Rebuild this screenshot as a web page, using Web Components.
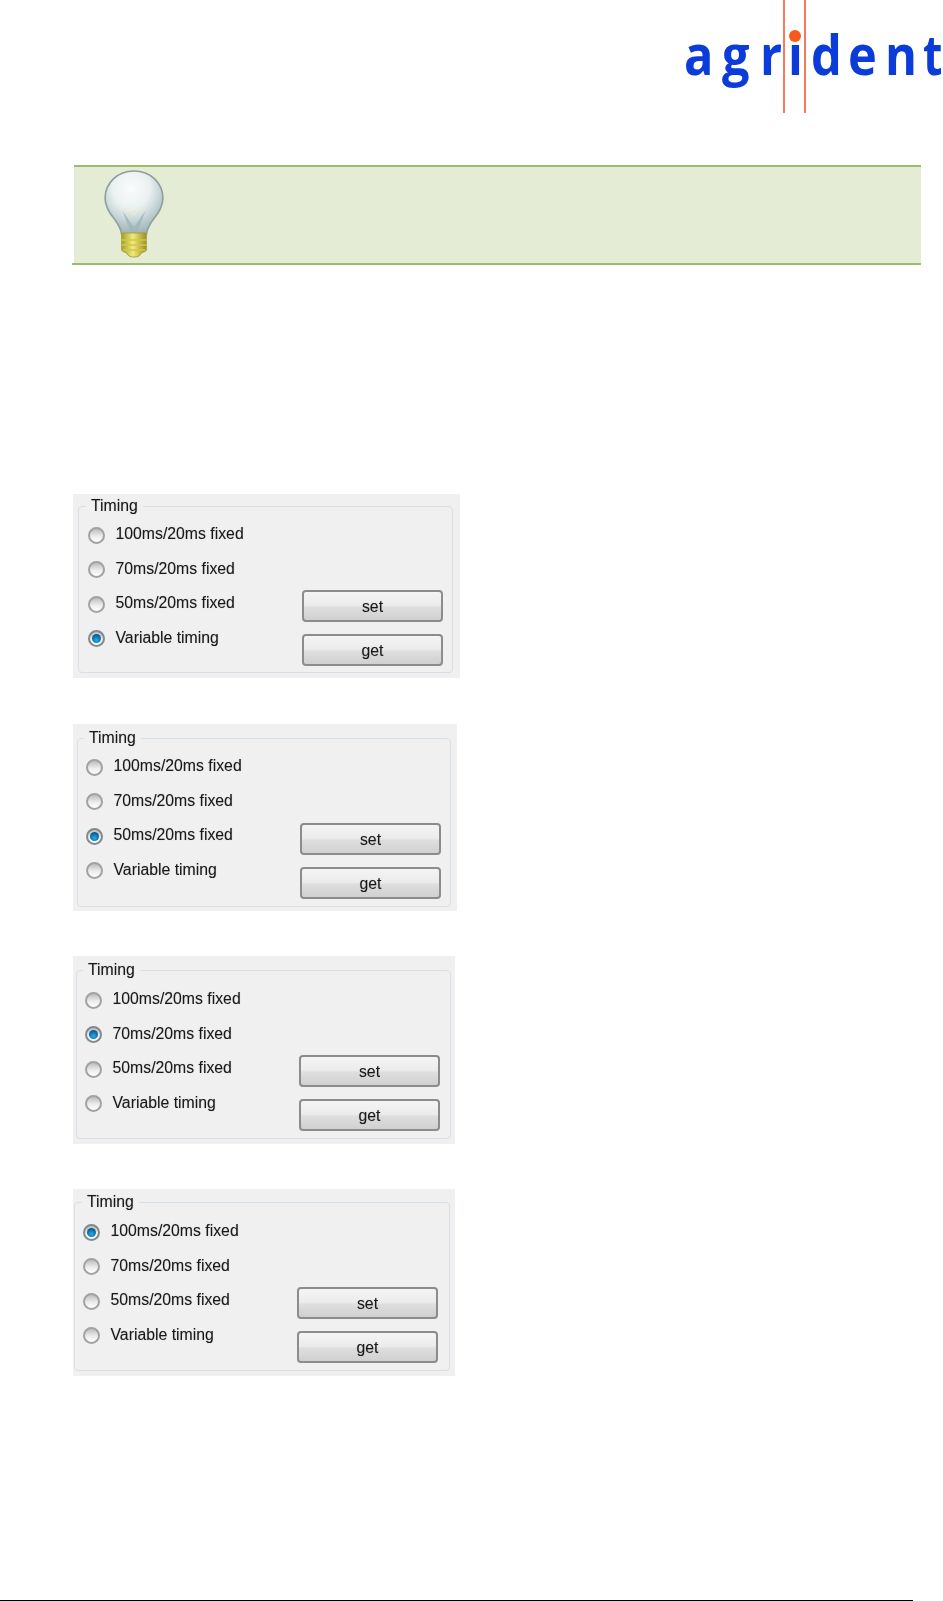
<!DOCTYPE html>
<html>
<head>
<meta charset="utf-8">
<title>agrident timing</title>
<style>
    html, body { margin: 0; padding: 0; background: #fff; }
    body { width: 943px; height: 1601px; overflow: hidden; display: flex; flex-direction: column; font-family: "Liberation Sans", sans-serif; }
    page-footer { margin-top: auto; }
</style>
</head>
<body>
<agrident-logo></agrident-logo>
<tip-note></tip-note>
<timing-panel selected="3" top="229" width="387" height="184" inset="12 7 5 5" title-x="7" radio-x="8.5" radio-y="11" btn-right="9" btn-bottom="6"></timing-panel>
<timing-panel selected="2" top="46" width="384" height="187" inset="14 6 4 4" title-x="6" radio-x="7.5" radio-y="11" btn-right="9" btn-bottom="7"></timing-panel>
<timing-panel selected="1" top="45" width="382" height="188" inset="14 4 5 3" title-x="6" radio-x="7.5" radio-y="12" btn-right="10" btn-bottom="7"></timing-panel>
<timing-panel selected="0" top="45" width="382" height="187" inset="13 5 5 1" title-x="7" radio-x="7.5" radio-y="12" btn-right="11" btn-bottom="7"></timing-panel>
<page-footer></page-footer>

<script>
class AgridentLogo extends HTMLElement {
    connectedCallback() {
        this.attachShadow({ mode: 'open' }).innerHTML = `
        <style>
            :host { display: block; height: 113px; overflow: hidden; }
            .logo { position: relative; height: 113px; margin-left: 684px; overflow: hidden; }
            .word { display: flex; padding-top: 15px; color: #0b3bd9; font: 700 56px/76px "Open Sans", sans-serif; white-space: nowrap; }
            .word span { display: block; flex: none; transform: scaleX(.87); transform-origin: 0 50%; }
            .word span.t { transform: scaleX(.8); }
            .line { position: absolute; top: 0; bottom: 0; width: 2px; background: #f97a5a; }
            .dot { position: absolute; left: 105px; top: 30px; width: 12px; height: 12px; border-radius: 50%; background: #f95a1c; }
        </style>
        <div class="logo">
            <div class="word"><span style="width:38px">a</span><span style="width:38px">g</span><span style="width:28px">r</span><span style="width:23px">i</span><span style="width:37px">d</span><span style="width:37px">e</span><span style="width:38px">n</span><span class="t">t</span></div>
            <div class="line" style="left:99px"></div>
            <div class="line" style="left:120px"></div>
            <div class="dot"></div>
        </div>`;
    }
}

class TipNote extends HTMLElement {
    connectedCallback() {
        this.attachShadow({ mode: 'open' }).innerHTML = `
        <style>
            :host { display: block; margin: 52px 22px 0 72px; }
            .box { height: 96px; margin-left: 2px; background: #e5ecd5; border-top: 2px solid #9dbd66; }
            .bottom { height: 2px; background: #9dbd66; }
            svg { display: block; margin-left: 27px; padding-top: 2px; }
        </style>
        <div class="box">
            <svg width="66" height="92" viewBox="0 0 64 92" preserveAspectRatio="none">
                <defs>
                    <radialGradient id="glass" cx="45%" cy="28%" r="72%">
                        <stop offset="0" stop-color="#fbfcfc"/>
                        <stop offset=".45" stop-color="#eaf0f0"/>
                        <stop offset=".75" stop-color="#bfcfd1"/>
                        <stop offset="1" stop-color="#9fb3b6"/>
                    </radialGradient>
                    <linearGradient id="screw" x1="0" x2="1" y1="0" y2="0">
                        <stop offset="0" stop-color="#a89f24"/>
                        <stop offset=".45" stop-color="#f2ea7a"/>
                        <stop offset="1" stop-color="#9c9020"/>
                    </linearGradient>
                    <filter id="soft"><feGaussianBlur stdDeviation=".7"/></filter>
                </defs>
                <g filter="url(#soft)">
                    <path d="M32 2C16 2 4 14 4 29c0 9 4 15 9 21 3 4 6 9 7 15h24c1-6 4-11 7-15 5-6 9-12 9-21C60 14 48 2 32 2z" fill="url(#glass)" stroke="#909f9b" stroke-width="1.6"/>
                    <path d="M21 42l8 22h6l8-22-10 15h-2z" fill="#9fb6ba" opacity=".85"/>
                    <path d="M21 40l5-1 6 7 6-7 5 1" fill="none" stroke="#eeeec0" stroke-width="1"/>
                    <path d="M20 64h24v17c0 1-2 2-5 3-1 3-3 4-7 4s-6-1-7-4c-3-1-5-2-5-3z" fill="url(#screw)" stroke="#a09a34" stroke-width=".8"/>
                    <path d="M20 71h24M20 76h24M21 81h22" stroke="#d0c748" stroke-width="1.5"/>
                </g>
            </svg>
        </div>
        <div class="bottom"></div>`;
    }
}

class TimingRadio extends HTMLElement {
    connectedCallback() {
        let on = this.hasAttribute('checked');
        this.attachShadow({ mode: 'open' }).innerHTML = `
        <style>
            :host { display: flex; align-items: center; gap: 11px; height: 34.5px; }
            .ring { width: 17px; height: 17px; box-sizing: border-box; border-radius: 50%; border: 2px solid ${on ? '#7f8a90' : '#a2a2a2'}; background: linear-gradient(#bdbdbd, #ececec 55%, #fff); display: flex; align-items: center; justify-content: center; flex: none; }
            .pip { width: 9px; height: 9px; border-radius: 50%; background: radial-gradient(circle at 50% 68%, #27ade6 0, #0b6ea8 55%, #0a4569 100%); }
            label { font: 15.8px/20px "Liberation Sans", sans-serif; color: #1a1a1a; text-shadow: 0 0 1px rgba(0,0,0,.3); position: relative; top: -1px; white-space: nowrap; }
        </style>
        <div class="ring">${on ? '<div class="pip"></div>' : ''}</div>
        <label><slot></slot></label>`;
    }
}

class PushButton extends HTMLElement {
    connectedCallback() {
        this.attachShadow({ mode: 'open' }).innerHTML = `
        <style>
            :host { display: flex; align-items: center; justify-content: center; box-sizing: border-box; width: 141px; height: 32px; padding-top: 1px; border: 2px solid #8c8c8c; border-radius: 4px; background: linear-gradient(#f4f4f4 0, #ececec 47%, #dedede 55%, #d0d0d0 100%); font: 15.8px/20px "Liberation Sans", sans-serif; color: #1a1a1a; text-shadow: 0 0 1px rgba(0,0,0,.3); }
        </style>
        <slot></slot>`;
    }
}

class TimingPanel extends HTMLElement {
    connectedCallback() {
        let a = n => this.getAttribute(n);
        let [it, ir, ib, il] = a('inset').split(' ');
        let selected = Number(a('selected'));
        let labels = ['100ms/20ms fixed', '70ms/20ms fixed', '50ms/20ms fixed', 'Variable timing'];
        let radios = labels.map((t, i) => `<timing-radio ${i === selected ? 'checked' : ''}>${t}</timing-radio>`).join('');
        this.attachShadow({ mode: 'open' }).innerHTML = `
        <style>
            :host { display: block; box-sizing: border-box; flex: none; margin: ${a('top')}px 0 0 73px; width: ${a('width')}px; height: ${a('height')}px; background: #f0f0f0; padding: ${it}px ${ir}px ${ib}px ${il}px; filter: blur(.35px); }
            .group { position: relative; height: 100%; box-sizing: border-box; border: 1px solid #d6e0e8; border-radius: 4px; display: grid; grid-template-columns: 1fr auto; padding: ${a('radio-y')}px ${a('btn-right')}px ${a('btn-bottom')}px ${a('radio-x')}px; }
            .title { position: absolute; left: ${a('title-x')}px; top: -11px; padding: 0 5px; background: #f0f0f0; font: 15.8px/20px "Liberation Sans", sans-serif; color: #1a1a1a; text-shadow: 0 0 1px rgba(0,0,0,.3); }
            .btns { display: flex; flex-direction: column; justify-content: flex-end; gap: 12px; }
        </style>
        <div class="group">
            <div class="title">Timing</div>
            <div>${radios}</div>
            <div class="btns"><push-button>set</push-button><push-button>get</push-button></div>
        </div>`;
    }
}

class PageFooter extends HTMLElement {
    connectedCallback() {
        this.attachShadow({ mode: 'open' }).innerHTML = `
        <style>
            :host { display: block; height: 1px; width: 913px; background: #000; }
        </style>`;
    }
}

customElements.define('timing-radio', TimingRadio);
customElements.define('push-button', PushButton);
customElements.define('timing-panel', TimingPanel);
customElements.define('agrident-logo', AgridentLogo);
customElements.define('tip-note', TipNote);
customElements.define('page-footer', PageFooter);
</script>
</body>
</html>
